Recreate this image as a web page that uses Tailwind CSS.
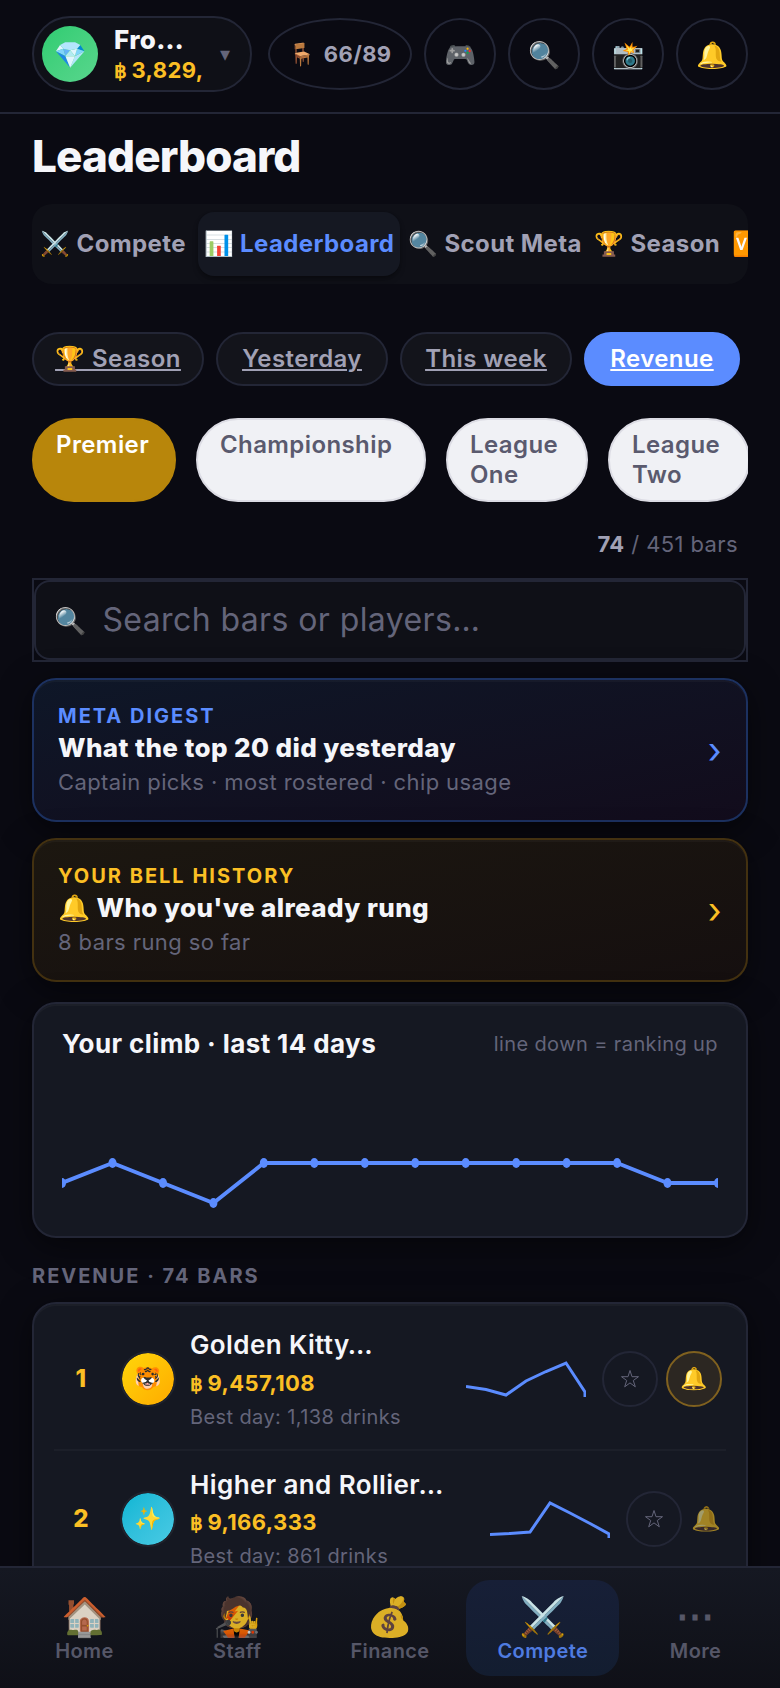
<!DOCTYPE html>
<html lang="en">
<head>
<meta charset="utf-8">
<meta name="viewport" content="width=device-width, initial-scale=1">
<title>Leaderboard</title>
<script src="https://cdn.jsdelivr.net/npm/@tailwindcss/browser@4"></script>
</head>
<body class="h-screen flex flex-col overflow-hidden bg-[#0a0a12] font-[Inter,'Noto_Sans',sans-serif] tracking-wide text-[#f5f6fa]">

<header class="shrink-0 flex items-center gap-4 px-8 pt-4 pb-5 border-b-2 border-[#232636]">
  <button class="flex items-center h-[76px] flex-1 min-w-0 rounded-full border-2 border-[#232636] bg-[#0f1017] pl-2 pr-5 text-left">
    <span class="size-14 shrink-0 rounded-full bg-linear-to-br from-[#2ecc71] to-[#58d68d] flex items-center justify-center text-[26px]">💎</span>
    <span class="ml-4 flex-1 min-w-0 flex flex-col">
      <span class="text-[26px] leading-8 font-extrabold truncate">Fro…</span>
      <span class="text-[22px] leading-7 font-bold text-[#fbbf24] whitespace-nowrap"><span class="font-['Liberation_Sans'] text-[20px] mr-1">฿</span>3,829,</span>
    </span>
    <span class="ml-3 text-[20px] text-[#64657a]">▾</span>
  </button>
  <div class="flex gap-3">
    <button class="w-36 h-[72px] rounded-[50%] border-2 border-[#232636] flex items-center justify-center gap-2 text-[22px] font-bold text-[#a1a1b5]"><span>🪑</span><span>66/89</span></button>
    <button aria-label="Games" class="size-[72px] rounded-full border-2 border-[#232636] text-[26px]">🎮</button>
    <button aria-label="Search" class="size-[72px] rounded-full border-2 border-[#232636] text-[26px]">🔍</button>
    <button aria-label="Snapshot" class="size-[72px] rounded-full border-2 border-[#232636] text-[26px]">📸</button>
    <button aria-label="Notifications" class="size-[72px] rounded-full border-2 border-[#232636] text-[26px]">🔔</button>
  </div>
</header>

<main class="flex-1 min-h-0 overflow-hidden px-8 pt-4">
  <h1 class="text-[44px] leading-[52px] font-extrabold tracking-[-0.02em]">Leaderboard</h1>

  <nav aria-label="Sections" class="mt-[22px] h-20 p-2 rounded-[20px] bg-[#0f1017] overflow-hidden flex gap-2 text-[24px] font-bold text-[#a1a1b5] whitespace-nowrap">
    <a href="#" class="shrink-0 min-w-[150px] flex items-center">⚔️ Compete</a>
    <a href="#" aria-current="page" class="shrink-0 min-w-[202px] flex items-center justify-center rounded-2xl bg-[#151822] text-[#5b8cff] shadow-md shadow-black/30">📊 Leaderboard</a>
    <a href="#" class="shrink-0 min-w-[178px] flex items-center">🔍 Scout Meta</a>
    <a href="#" class="shrink-0 min-w-[130px] flex items-center">🏆 Season</a>
    <a href="#" aria-label="Versus" class="shrink-0 flex items-center">🆚</a>
  </nav>

  <div class="mt-12 flex gap-3 text-[24px] leading-[30px] font-semibold text-[#a1a1b5] text-center underline whitespace-nowrap">
    <a href="#" class="min-w-[172px] px-5 py-[10px] rounded-full border-2 border-[#232636] bg-[#13141b]">🏆 Season</a>
    <a href="#" class="min-w-[172px] px-5 py-[10px] rounded-full border-2 border-[#232636] bg-[#13141b]">Yesterday</a>
    <a href="#" class="min-w-[172px] px-5 py-[10px] rounded-full border-2 border-[#232636] bg-[#13141b]">This week</a>
    <a href="#" aria-current="true" class="min-w-[156px] px-5 py-[10px] rounded-full border-2 border-[#5b8cff] bg-[#5b8cff] text-white">Revenue</a>
  </div>

  <div class="mt-8 flex gap-5 overflow-hidden text-[24px] leading-[30px] font-semibold text-[#5a5a6e]">
    <button class="shrink-0 min-w-36 flex items-start text-left px-[22px] py-[10px] rounded-[42px] border-2 border-[#b8860b] bg-[#b8860b] text-white">Premier</button>
    <button class="shrink-0 min-w-[230px] flex items-start text-left px-[22px] py-[10px] rounded-[42px] border-2 border-[#dcdce4] bg-[#f0f1f5]">Championship</button>
    <button class="shrink-0 min-w-[142px] text-left px-[22px] py-[10px] rounded-[42px] border-2 border-[#dcdce4] bg-[#f0f1f5]">League<br>One</button>
    <button class="shrink-0 min-w-[142px] text-left px-[22px] py-[10px] rounded-[42px] border-2 border-[#dcdce4] bg-[#f0f1f5]">League<br>Two</button>
  </div>

  <p class="mt-7 pr-[10px] text-right text-[22px] leading-7 text-[#64657a]"><strong class="font-bold text-[#a1a1b5]">74</strong> / 451 bars</p>

  <div class="mt-5 border-2 border-[#232636] bg-[#0a0a12]">
    <label class="flex items-center h-20 px-[18px] rounded-2xl border-2 border-[#232636] bg-[#0f1017]">
      <span class="text-[26px]">🔍</span>
      <input type="search" aria-label="Search bars or players" placeholder="Search bars or players…" class="ml-4 flex-1 min-w-0 bg-transparent text-[32px] outline-none placeholder:text-[#64657a]">
    </label>
  </div>

  <a href="#" class="mt-4 h-36 flex items-center justify-between px-6 rounded-3xl border-2 border-[#1c3160] bg-linear-to-br from-[#0e1728] to-[#120c1c] shadow-[0_8px_32px_#00000080,inset_0_2px_0_#ffffff08]">
    <span class="flex flex-col">
      <span class="text-[20px] leading-7 font-bold tracking-widest text-[#5b8cff]">META DIGEST</span>
      <span class="text-[26px] leading-9 font-extrabold">What the top 20 did yesterday</span>
      <span class="text-[22px] leading-8 text-[#64657a]">Captain picks · most rostered · chip usage</span>
    </span>
    <span class="text-[36px] text-[#5b8cff]">›</span>
  </a>

  <a href="#" class="mt-4 h-36 flex items-center justify-between px-6 rounded-3xl border-2 border-[#433110] bg-linear-to-br from-[#1c1710] to-[#150f0f] shadow-[0_8px_32px_#00000080,inset_0_2px_0_#ffffff08]">
    <span class="flex flex-col">
      <span class="text-[20px] leading-7 font-bold tracking-widest text-[#fbbf24]">YOUR BELL HISTORY</span>
      <span class="text-[26px] leading-9 font-extrabold">🔔 Who you've already rung</span>
      <span class="text-[22px] leading-8 text-[#64657a]">8 bars rung so far</span>
    </span>
    <span class="text-[36px] text-[#fbbf24]">›</span>
  </a>

  <section class="mt-5 px-7 pt-[22px] pb-[22px] rounded-3xl border-2 border-[#232636] bg-[#151822] shadow-[0_8px_32px_#00000080,inset_0_2px_0_#ffffff08]">
    <div class="flex items-center justify-between">
      <h2 class="text-[26px] leading-9 font-bold">Your climb · last 14 days</h2>
      <span class="text-[20px] text-[#64657a]">line down = ranking up</span>
    </div>
    <svg viewBox="0 0 656 120" preserveAspectRatio="none" class="mt-8 w-full h-[120px]" role="img" aria-label="Rank over the last 14 days">
      <g fill="#5b8cff">
        <polyline fill="none" stroke="#5b8cff" stroke-width="4" stroke-linejoin="round" points="0,89 50.5,69 101,89 151.4,109 201.8,69 252.3,69 302.8,69 353.2,69 403.7,69 454.2,69 504.6,69 555.1,69 605.5,89 656,89"/>
        <ellipse cx="0" cy="89" rx="4" ry="5"/><ellipse cx="50.5" cy="69" rx="4" ry="5"/><ellipse cx="101" cy="89" rx="4" ry="5"/><ellipse cx="151.4" cy="109" rx="4" ry="5"/><ellipse cx="201.8" cy="69" rx="4" ry="5"/><ellipse cx="252.3" cy="69" rx="4" ry="5"/><ellipse cx="302.8" cy="69" rx="4" ry="5"/><ellipse cx="353.2" cy="69" rx="4" ry="5"/><ellipse cx="403.7" cy="69" rx="4" ry="5"/><ellipse cx="454.2" cy="69" rx="4" ry="5"/><ellipse cx="504.6" cy="69" rx="4" ry="5"/><ellipse cx="555.1" cy="69" rx="4" ry="5"/><ellipse cx="605.5" cy="89" rx="4" ry="5"/><ellipse cx="656" cy="89" rx="4" ry="5"/>
      </g>
    </svg>
  </section>

  <h2 class="mt-6 text-[20px] leading-7 font-bold tracking-widest text-[#64657a]">REVENUE · 74 BARS</h2>

  <ol class="mt-3 px-5 pb-2 rounded-3xl border-2 border-[#232636] bg-[#151822] shadow-[0_8px_32px_#00000080,inset_0_2px_0_#ffffff08]">
    <li class="flex items-center pr-1 pt-5 pb-4 border-b-2 border-[#1c1f29]">
      <span class="w-[54px] shrink-0 text-center text-[24px] font-extrabold text-[#fbbf24]">1</span>
      <span class="ml-3 size-14 shrink-0 rounded-full border-2 border-[#20232d] bg-linear-to-br from-[#ffd60a] to-[#ffaa00] bg-clip-padding flex items-center justify-center text-[22px]">🐯</span>
      <span class="ml-[14px] flex-1 min-w-0 flex flex-col">
        <span class="text-[26px] leading-[42px] font-semibold truncate">Golden Kitty…</span>
        <span class="text-[22px] leading-[34px] font-bold text-[#fbbf24]"><span class="font-['Liberation_Sans'] text-[20px] mr-1">฿</span>9,457,108</span>
        <span class="text-[20px] leading-8 text-[#64657a]">Best day: 1,138 drinks</span>
      </span>
      <svg class="w-[120px] h-10 shrink-0" viewBox="0 0 120 40" fill="none" aria-hidden="true"><path d="M0 27.500 20 30.500 40 36 60 22 80 12.500 100 4 119 33V38" stroke="#5b8cff" stroke-width="3"/></svg>
      <button aria-label="Favourite Golden Kitty" class="ml-4 size-14 shrink-0 rounded-full border-2 border-[#232636] flex items-center justify-center text-[#64657a]"><svg class="size-5" viewBox="0 0 20 20" fill="none" stroke="currentColor" aria-hidden="true"><path d="M10 1.500 12 7.700H18.500L13.300 11.500 15.300 17.800 10 13.900 4.700 17.800 6.700 11.500 1.500 7.700H8Z"/></svg></button>
      <button aria-label="Bell rung" class="ml-2 size-14 shrink-0 rounded-full border-2 border-[#80611f] bg-[#2c2722] text-[22px]">🔔</button>
    </li>
    <li class="flex items-center pr-1 pt-[14px] pb-4">
      <span class="w-[54px] shrink-0 text-center text-[24px] font-extrabold text-[#fbbf24]">2</span>
      <span class="ml-3 size-14 shrink-0 rounded-full border-2 border-[#20232d] bg-linear-to-br from-[#06b6d4] to-[#48cae4] bg-clip-padding flex items-center justify-center text-[22px]">✨</span>
      <span class="ml-[14px] flex-1 min-w-0 flex flex-col">
        <span class="text-[26px] leading-10 font-semibold truncate">Higher and Rollier…</span>
        <span class="text-[22px] leading-[34px] font-bold text-[#fbbf24]"><span class="font-['Liberation_Sans'] text-[20px] mr-1">฿</span>9,166,333</span>
        <span class="text-[20px] leading-8 text-[#64657a]">Best day: 861 drinks</span>
      </span>
      <svg class="w-[120px] h-10 shrink-0" viewBox="0 0 120 40" fill="none" aria-hidden="true"><path d="M0 35.500 20 34.500 40 33 60 4 80 14 100 24.500 119 35V39" stroke="#5b8cff" stroke-width="3"/></svg>
      <button aria-label="Favourite Higher and Rollier" class="ml-4 size-14 shrink-0 rounded-full border-2 border-[#232636] flex items-center justify-center text-[#64657a]"><svg class="size-5" viewBox="0 0 20 20" fill="none" stroke="currentColor" aria-hidden="true"><path d="M10 1.500 12 7.700H18.500L13.300 11.500 15.300 17.800 10 13.900 4.700 17.800 6.700 11.500 1.500 7.700H8Z"/></svg></button>
      <button aria-label="Ring bell" class="ml-2 w-8 shrink-0 text-[24px] opacity-60">🔔</button>
    </li>
  </ol>
</main>

<nav aria-label="Main" class="relative shrink-0 flex px-2 py-3 border-t-2 border-[#232636] bg-linear-to-b from-[#151822] to-[#0f1017] text-[20px] leading-6 font-semibold text-[#565768]">
  <a href="#" class="flex-1 h-24 flex flex-col items-center justify-center rounded-3xl"><span class="text-[38px] leading-[46px] opacity-85">🏠</span>Home</a>
  <a href="#" class="flex-1 h-24 flex flex-col items-center justify-center rounded-3xl"><span class="text-[38px] leading-[46px] opacity-85">🧑‍🎤</span>Staff</a>
  <a href="#" class="flex-1 h-24 flex flex-col items-center justify-center rounded-3xl"><span class="text-[38px] leading-[46px] opacity-85">💰</span>Finance</a>
  <a href="#" aria-current="page" class="flex-1 h-24 flex flex-col items-center justify-center rounded-3xl bg-linear-to-b from-[#171f37] to-[#131d30] text-[#4f7be0]"><span class="text-[38px] leading-[46px]">⚔️</span>Compete</a>
  <a href="#" class="flex-1 h-24 flex flex-col items-center justify-center rounded-3xl"><span class="text-[38px] leading-[46px]">⋯</span>More</a>
</nav>
</body>
</html>
